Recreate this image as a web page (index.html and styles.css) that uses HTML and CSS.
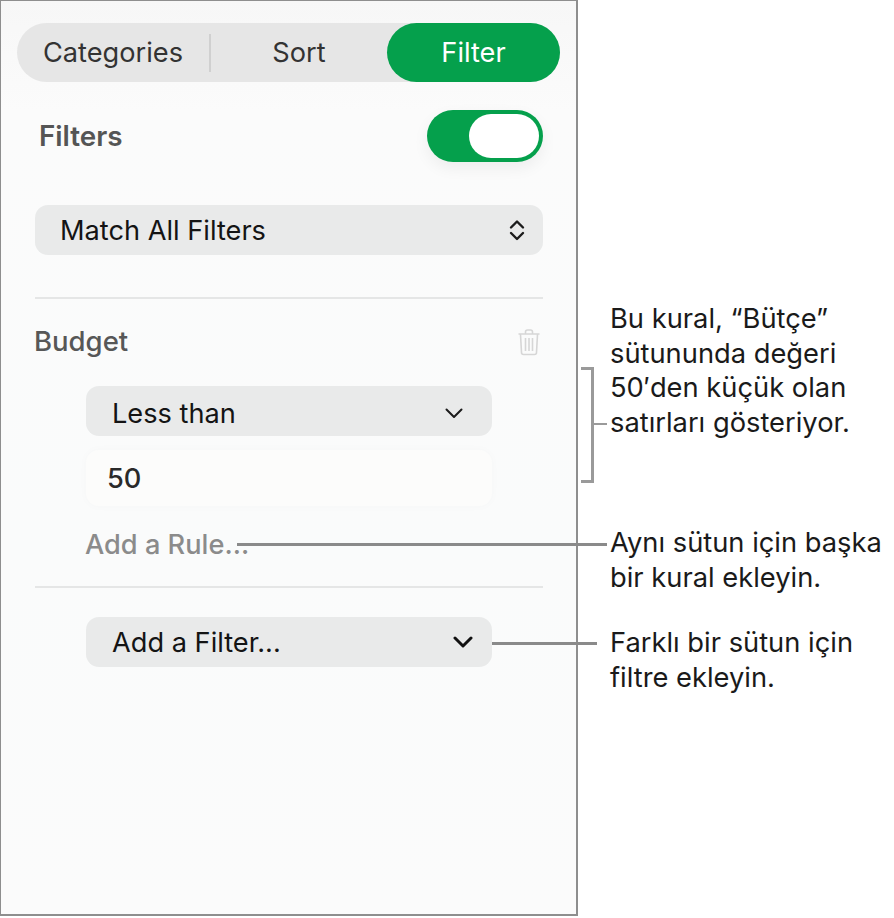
FILE: index.html
```html
<!DOCTYPE html>
<html lang="en">
<head>
    <meta charset="UTF-8">
    <meta name="viewport" content="width=device-width, initial-scale=1.0">
    <title>Filter</title>
    <link rel="stylesheet" href="styles.css">
</head>
<body>
    <div class="page">
        <div class="panel">
            <div class="tabs">
                <div class="tab tab-categories">Categories</div>
                <div class="tab-divider"></div>
                <div class="tab tab-sort">Sort</div>
                <div class="tab tab-filter">Filter</div>
            </div>

            <div class="filters-row">
                <span class="filters-label">Filters</span>
                <div class="toggle"><div class="toggle-knob"></div></div>
            </div>

            <div class="select select-wide">
                <span>Match All Filters</span>
                <svg class="updown" width="16" height="24" viewBox="0 0 16 24"><path d="M2 9.500 8 3.500l6 6M2 15l6 6 6-6" fill="none" stroke="#1c1c1c" stroke-width="2.400" stroke-linecap="round" stroke-linejoin="round"/></svg>
            </div>

            <hr class="rule rule-top">

            <div class="budget-row">
                <span class="budget-label">Budget</span>
                <svg class="trash" width="24" height="28" viewBox="0 0 24 28"><path d="M1.500 6h21M8.500 5.500V4a2 2 0 0 1 2-2h3a2 2 0 0 1 2 2v1.500M3.500 6.500l1 18a2 2 0 0 0 2 2h11a2 2 0 0 0 2-2l1-18M8.500 10v13M12 10v13M15.500 10v13" fill="none" stroke="#d6d6d6" stroke-width="1.600"/></svg>
            </div>

            <div class="rule-group">
                <div class="select select-low">
                    <span>Less than</span>
                    <svg class="chevron" width="20" height="12" viewBox="0 0 20 12"><path d="M2.500 2.500 10 10l7.500-7.500" fill="none" stroke="#1c1c1c" stroke-width="2" stroke-linecap="round" stroke-linejoin="round"/></svg>
                </div>
                <div class="value-field">50</div>
                <div class="add-rule">Add a Rule...</div>
            </div>

            <hr class="rule rule-bottom">

            <div class="rule-group">
                <div class="select">
                    <span>Add a Filter...</span>
                    <svg class="chevron chevron-bold" width="20" height="12" viewBox="0 0 20 12"><path d="M2 2l8 8 8-8" fill="none" stroke="#111" stroke-width="3" stroke-linecap="round" stroke-linejoin="round"/></svg>
                </div>
            </div>
        </div>

        <!-- callouts -->
        <div class="bracket"></div>
        <div class="line line-bracket"></div>
        <div class="line line-rule"></div>
        <div class="line line-filter"></div>
        <p class="note note-budget">Bu kural, “Bütçe”<br>sütununda değeri<br>50′den küçük olan<br>satırları gösteriyor.</p>
        <p class="note note-rule">Aynı sütun için başka<br>bir kural ekleyin.</p>
        <p class="note note-filter">Farklı bir sütun için<br>filtre ekleyin.</p>
    </div>
</body>
</html>
```

FILE: styles.css
```css
body {
    margin: 0;
    background-color: #fff;
    font-family: Inter, "Liberation Sans", sans-serif;
    color: #1c1c1c;
}

.page {
    position: relative;
    width: 894px;
    height: 918px;
    overflow: hidden;
}

.panel {
    box-sizing: border-box;
    width: 578px;
    height: 916px;
    padding: 22px 33px 0 34px;
    border: 1px solid #8e8e8e;
    border-width: 1px 2px 2px 1px;
    background: linear-gradient(#f7f7f7, #fbfbfb 12%, #fafbfb 60%, #fbfbfb);
}

.tabs {
    display: flex;
    align-items: center;
    height: 59px;
    margin: 0 -17px 0 -18px;
    border-radius: 30px;
    background-color: #e6e6e6;
    font-size: 27.200px;
    color: #333;
}

.tab {
    display: flex;
    align-items: center;
    justify-content: center;
    height: 100%;
}

.tab-categories {
    width: 192px;
}

.tab-divider {
    width: 2px;
    height: 38px;
    background-color: #d0d0d0;
}

.tab-sort {
    width: 176px;
}

.tab-filter {
    flex: 1;
    border-radius: 30px;
    background-color: #05a04c;
    color: #fff;
}

.filters-row {
    display: flex;
    align-items: center;
    justify-content: space-between;
    height: 52px;
    margin-top: 28px;
    padding-left: 4px;
}

.filters-label {
    font-size: 27.800px;
    font-weight: 600;
    color: #555;
}

.toggle {
    display: flex;
    justify-content: flex-end;
    align-items: center;
    box-sizing: border-box;
    width: 116px;
    height: 52px;
    padding-right: 4px;
    border-radius: 26px;
    background-color: #05a04c;
    box-shadow: 0 6px 16px rgba(0, 0, 0, 0.06);
}

.toggle-knob {
    width: 70px;
    height: 44px;
    border-radius: 22px;
    background-color: #fff;
}

.select {
    display: flex;
    align-items: center;
    justify-content: space-between;
    box-sizing: border-box;
    height: 50px;
    padding: 0 26px;
    border-radius: 13px;
    background-color: #e9eaea;
    font-size: 27.200px;
    color: #141414;
}

.select-wide {
    margin-top: 43px;
    padding-right: 18px;
    padding-left: 25px;
}

.select-low {
    padding-top: 4px;
}

.rule {
    height: 2px;
    margin: 0;
    border: 0;
    background-color: #e5e6e6;
}

.rule-top {
    margin-top: 42px;
}

.budget-row {
    display: flex;
    align-items: center;
    justify-content: space-between;
    height: 28px;
    margin-top: 28px;
    padding-right: 2px;
}

.budget-label {
    margin-left: -1px;
    font-size: 27.500px;
    font-weight: 500;
    color: #575757;
}

.trash {
    margin-top: 1px;
}

.rule-group {
    width: 406px;
    margin-left: 51px;
}

.budget-row + .rule-group {
    margin-top: 31px;
}

.chevron {
    margin-right: 2px;
}

.chevron-bold {
    margin-right: -7px;
}

.value-field {
    display: flex;
    align-items: center;
    box-sizing: border-box;
    height: 56px;
    margin-top: 14px;
    padding-left: 21px;
    border-radius: 13px;
    background-color: #fcfcfb;
    box-shadow: 0 0 10px rgba(0, 0, 0, 0.025);
    font-size: 27.200px;
    font-weight: 500;
    color: #2a2a2a;
}

.add-rule {
    margin-top: 23px;
    margin-left: -1px;
    font-size: 27.200px;
    font-weight: 500;
    line-height: 32px;
    color: #8b8b8b;
}

.rule-bottom {
    margin-top: 25px;
}

.rule-bottom + .rule-group {
    margin-top: 29px;
}

.bracket {
    position: absolute;
    left: 581px;
    top: 367px;
    width: 10px;
    height: 110px;
    border: 3px solid #9a9a9a;
    border-left: 0;
}

.line {
    position: absolute;
    height: 3px;
    background-color: #8a8a8a;
}

.line-bracket {
    left: 593px;
    top: 423px;
    width: 14px;
    height: 2px;
    background-color: #9a9a9a;
}

.line-rule {
    left: 237px;
    top: 543px;
    width: 370px;
}

.line-filter {
    left: 492px;
    top: 642px;
    width: 105px;
}

.note {
    position: absolute;
    left: 610px;
    margin: 0;
    font-size: 27.300px;
    line-height: 34.700px;
    white-space: nowrap;
    color: #1a1a1a;
}

.note-budget {
    top: 302px;
}

.note-rule {
    top: 526px;
}

.note-filter {
    top: 626px;
}
```
